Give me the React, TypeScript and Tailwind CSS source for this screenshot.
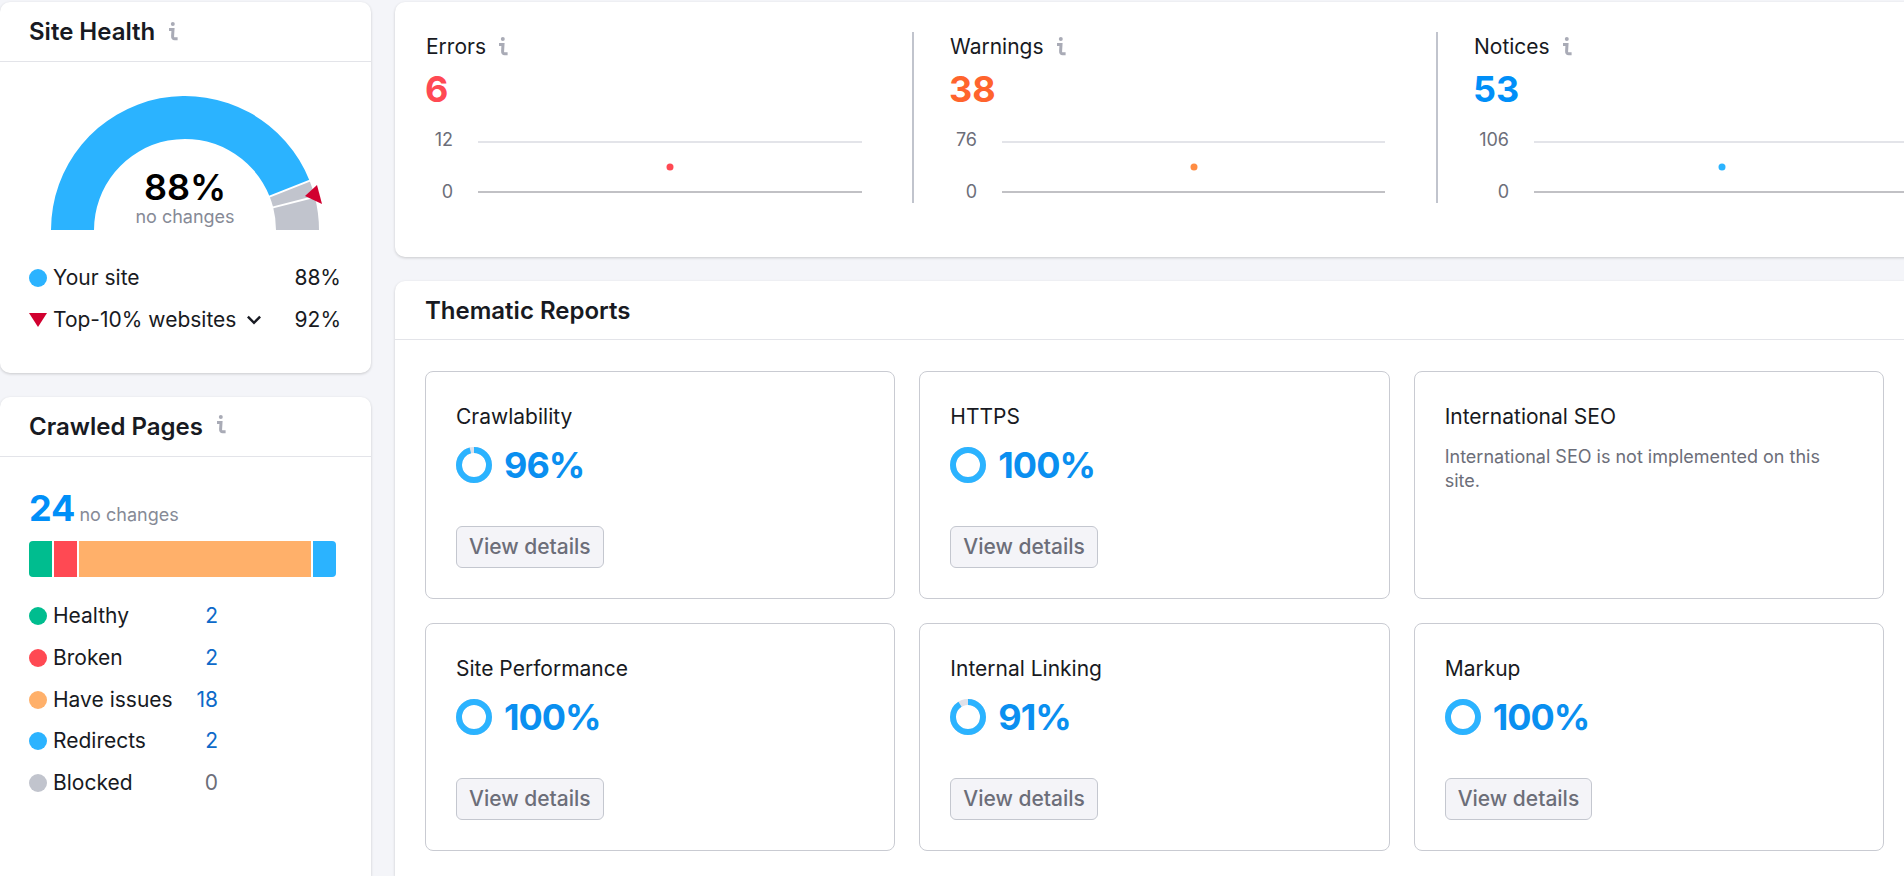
const polar = (r: number, pct: number) => {
  const a = Math.PI * (1 - pct / 100);
  return [150 + r * Math.cos(a), 136 - r * Math.sin(a)];
};

function sector(from: number, to: number) {
  const [x1, y1] = polar(134, from);
  const [x2, y2] = polar(134, to);
  const [x3, y3] = polar(91, to);
  const [x4, y4] = polar(91, from);
  return `M${x1} ${y1}A134 134 0 0 1 ${x2} ${y2}L${x3} ${y3}A91 91 0 0 0 ${x4} ${y4}Z`;
}

function InfoIcon({ className }: { className: string }) {
  return (
    <svg viewBox="0 0 10 19" className={className} fill="none">
      <circle cx="4.8" cy="2.1" r="2" fill="#a9abb6" />
      <path d="M1 7.6H5L4.6 14.2C4.5 15.9 5.2 16.8 6.6 16.8H9.6" stroke="#a9abb6" strokeWidth="3" />
    </svg>
  );
}

function Ring({ pct }: { pct: number }) {
  return (
    <svg viewBox="0 0 36 36" className="h-9 w-9 shrink-0 -rotate-90">
      <circle cx="18" cy="18" r="15" fill="none" stroke="#e0e1e9" strokeWidth="6" />
      <circle cx="18" cy="18" r="15" fill="none" stroke="#2bb3ff" strokeWidth="6" pathLength={100} strokeDasharray={`${pct} 100`} />
    </svg>
  );
}

function Dot({ className }: { className: string }) {
  return <span className={`h-[18px] w-[18px] shrink-0 rounded-full ${className}`} />;
}

function Stat(props: { title: string; value: string; valueClass: string; max: string; labelClass: string; plotClass: string; dotClass: string; className: string }) {
  return (
    <div className={`h-[171px] shrink-0 ${props.className}`}>
      <div className="flex h-7 items-center pt-px text-[21px] leading-7 text-[#181a22]">
        {props.title}
        <InfoIcon className="ml-[12px] h-[19px] w-[10px]" />
      </div>
      <div className={`mt-[9px] -ml-px text-[36px] leading-10 font-bold ${props.valueClass}`}>{props.value}</div>
      <div className="mt-[21px] flex items-start gap-[25px]">
        <div className={`flex h-[72px] flex-col justify-between text-right text-[18px] leading-5 text-[#6c6e79] ${props.labelClass}`}>
          <span>{props.max}</span>
          <span>0</span>
        </div>
        <div className={`relative mt-[11px] h-[52px] border-t-2 border-b-2 border-t-[#e3e4e9] border-b-[#c1c1c5] ${props.plotClass}`}>
          <span className={`absolute top-1/2 left-1/2 h-[7px] w-[7px] -translate-x-1/2 -translate-y-1/2 rounded-full ${props.dotClass}`} />
        </div>
      </div>
    </div>
  );
}

function Report({ name, pct }: { name: string; pct: number }) {
  return (
    <div className="h-[228px] rounded-lg border border-[#c9cbd2] bg-white px-[30px] pt-[31px]">
      <div className="text-[21px] leading-7 text-[#181a22]">{name}</div>
      <div className="mt-[14px] flex h-10 items-center gap-3">
        <Ring pct={pct} />
        <span className="text-[36px] leading-10 font-bold tracking-[-1px] text-[#0a8ff0]">{pct}%</span>
      </div>
      <button className="mt-[41px] h-[42px] rounded-md border border-[#c4c7cf] bg-[#f4f4f8] px-[12px] text-[21px] leading-7 font-medium text-[#6c6e79]">
        View details
      </button>
    </div>
  );
}

const pages = [
  { label: "Healthy", value: "2", dot: "bg-[#00bd8f]", color: "text-[#0d6ac9]" },
  { label: "Broken", value: "2", dot: "bg-[#ff4953]", color: "text-[#0d6ac9]" },
  { label: "Have issues", value: "18", dot: "bg-[#ffb06a]", color: "text-[#0d6ac9]" },
  { label: "Redirects", value: "2", dot: "bg-[#2bb3ff]", color: "text-[#0d6ac9]" },
  { label: "Blocked", value: "0", dot: "bg-[#c1c4cd]", color: "text-[#6c6e79]" },
];

export default function App() {
  return (
    <div className="flex h-[876px] w-[1904px] gap-6 overflow-hidden bg-[#f4f5f9] pt-[2px] [font-family:Inter,sans-serif]">
      {/* Left column */}
      <div className="flex w-[371px] shrink-0 flex-col gap-6">
        <section className="h-[371px] rounded-[10px] bg-white shadow-[0_1px_3px_rgba(0,0,0,0.18)]">
          <div className="flex h-[60px] items-center border-b border-[#e3e4e9] pl-[29px]">
            <h2 className="pt-px text-[24px] leading-7 font-semibold text-[#181a22]">Site Health</h2>
            <InfoIcon className="ml-[13px] h-[19px] w-[10px]" />
          </div>
          <div className="relative mt-[32px] ml-[35px] h-[136px] w-[300px]">
            <svg viewBox="0 0 300 136" className="h-[136px] w-[300px] overflow-visible">
              <path d={sector(0, 88)} fill="#2bb3ff" />
              <path d={sector(88, 92)} fill="#c1c4cd" />
              <path d={sector(92, 100)} fill="#c1c4cd" />
              <path d={`M${polar(88, 88).join(" ")}L${polar(137, 88).join(" ")}`} stroke="#fff" strokeWidth="2" />
              <path d={`M${polar(88, 92).join(" ")}L${polar(137, 92).join(" ")}`} stroke="#fff" strokeWidth="2" />
              <path d="M270 102L282 91L287 110Z" fill="#d1002f" />
            </svg>
            <div className="absolute top-[73px] left-0 w-[300px] text-center">
              <div className="text-[36px] leading-10 font-semibold text-black">88%</div>
              <div className="text-[18px] leading-5 text-[#868a96]">no changes</div>
            </div>
          </div>
          <div className="mt-[34px] flex flex-col gap-[14px] pr-[30px] pl-[29px] text-[21px] leading-7 text-[#181a22]">
            <div className="flex items-center">
              <Dot className="bg-[#2bb3ff]" />
              <span className="ml-[6px]">Your site</span>
              <span className="ml-auto">88%</span>
            </div>
            <div className="flex items-center">
              <svg viewBox="0 0 18 14" className="h-[14px] w-[18px] shrink-0">
                <path d="M0 0H18L9 14Z" fill="#d1002f" />
              </svg>
              <span className="ml-[6px]">Top-10% websites</span>
              <svg viewBox="0 0 14 9" className="ml-[10px] h-[10px] w-4" fill="none">
                <path d="M1.5 1.5L7 7L12.5 1.5" stroke="#181a22" strokeWidth="2.2" />
              </svg>
              <span className="ml-auto">92%</span>
            </div>
          </div>
        </section>

        <section className="flex-1 rounded-t-[10px] bg-white shadow-[0_1px_3px_rgba(0,0,0,0.18)]">
          <div className="flex h-[60px] items-center border-b border-[#e3e4e9] pl-[29px]">
            <h2 className="text-[24px] leading-7 font-semibold text-[#181a22]">Crawled Pages</h2>
            <InfoIcon className="ml-[13px] -mt-[4px] h-[19px] w-[10px]" />
          </div>
          <div className="px-[29px] pt-[31px]">
            <div className="flex items-baseline gap-[4px]">
              <span className="text-[36px] leading-10 font-bold text-[#008ff8]">24</span>
              <span className="text-[18px] leading-5 text-[#868a96]">no changes</span>
            </div>
            <div className="mt-[13px] flex h-9 w-[307px] gap-[2px] overflow-hidden rounded">
              <div className="w-[23px] bg-[#00bd8f]" />
              <div className="w-[23px] bg-[#ff4953]" />
              <div className="w-[232px] bg-[#ffb06a]" />
              <div className="w-[23px] bg-[#2bb3ff]" />
            </div>
            <div className="mt-[25px] flex w-[189px] flex-col gap-[13.8px] text-[21px] leading-7 text-[#181a22]">
              {pages.map((p) => (
                <div key={p.label} className="flex items-center">
                  <Dot className={p.dot} />
                  <span className="ml-[6px]">{p.label}</span>
                  <span className={`ml-auto ${p.color}`}>{p.value}</span>
                </div>
              ))}
            </div>
          </div>
        </section>
      </div>

      {/* Right column */}
      <div className="flex w-[1560px] shrink-0 flex-col gap-6">
        <section className="flex h-[255px] gap-9 rounded-[10px] bg-white pt-[30px] pl-[31px] shadow-[0_1px_3px_rgba(0,0,0,0.18)]">
          <Stat title="Errors" value="6" valueClass="text-[#ff4953]" max="12" labelClass="w-[27px]" plotClass="w-[384px]" dotClass="bg-[#ff4953]" className="w-[488px] border-r-2 border-[#c1c4cd]" />
          <Stat title="Warnings" value="38" valueClass="text-[#ff642d]" max="76" labelClass="w-[27px]" plotClass="w-[383px]" dotClass="bg-[#ff8c43]" className="w-[488px] border-r-2 border-[#c1c4cd]" />
          <Stat title="Notices" value="53" valueClass="text-[#008ff8]" max="106" labelClass="w-[35px]" plotClass="w-[376px]" dotClass="bg-[#2bb3ff]" className="w-[488px]" />
        </section>

        <section className="flex-1 rounded-t-[10px] bg-white shadow-[0_1px_3px_rgba(0,0,0,0.18)]">
          <div className="flex h-[59px] items-center border-b border-[#e3e4e9] pl-[30px]">
            <h2 className="pt-px text-[24px] leading-7 font-semibold text-[#181a22]">Thematic Reports</h2>
          </div>
          <div className="grid w-[1489px] grid-cols-3 gap-6 pt-[31px] pl-[30px]">
            <Report name="Crawlability" pct={96} />
            <Report name="HTTPS" pct={100} />
            <div className="h-[228px] rounded-lg border border-[#c9cbd2] bg-white px-[30px] pt-[31px]">
              <div className="text-[21px] leading-7 text-[#181a22]">International SEO</div>
              <p className="mt-[14px] text-[18px] leading-6 text-[#6c6e79]">International SEO is not implemented on this site.</p>
            </div>
            <Report name="Site Performance" pct={100} />
            <Report name="Internal Linking" pct={91} />
            <Report name="Markup" pct={100} />
          </div>
        </section>
      </div>
    </div>
  );
}
